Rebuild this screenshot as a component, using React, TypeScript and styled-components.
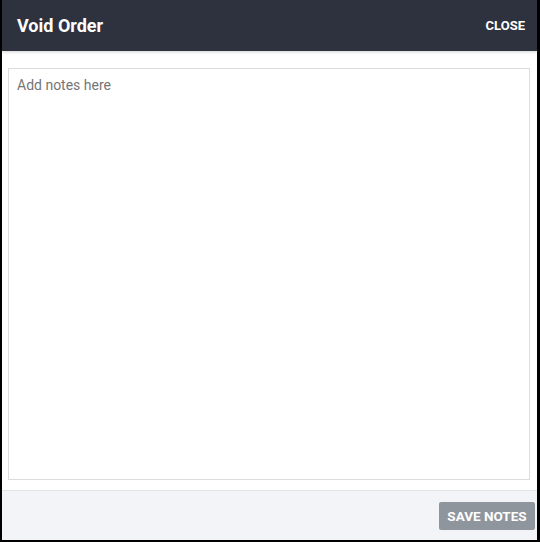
import React, { useState } from "react";
import styled, { createGlobalStyle } from "styled-components";

const GlobalStyle = createGlobalStyle`
  html, body {
    margin: 0;
    padding: 0;
    background: #000;
  }
  * {
    box-sizing: border-box;
  }
`;

const StyledDialog = styled.div`
  width: 540px;
  height: 542px;
  display: flex;
  flex-direction: column;
  border-style: solid;
  border-color: #000;
  border-width: 0 3px 2px 2px;
  background: #fff;
  font-family: Roboto, "Liberation Sans", sans-serif;
`;

const StyledHeader = styled.header`
  position: relative;
  z-index: 1;
  display: flex;
  justify-content: space-between;
  align-items: center;
  height: 51px;
  flex-shrink: 0;
  padding: 0 12px 0 15px;
  background: #2d323e;
  box-shadow: 0 1px 3px rgba(0, 0, 0, 0.18);
`;

const StyledTitle = styled.h1`
  margin: 0;
  font-size: 18px;
  font-weight: 700;
  color: #fff;
`;

const StyledCloseButton = styled.button`
  padding: 0;
  border: 0 none;
  background: none;
  font-family: inherit;
  font-size: 13px;
  font-weight: 700;
  color: #fff;
  cursor: pointer;
`;

const StyledBody = styled.div`
  flex: 1;
  display: flex;
  padding: 17px 7px 10px 6px;
`;

const StyledNotes = styled.textarea`
  flex: 1;
  resize: none;
  padding: 8px 8px;
  border: 1px solid #dcdcdc;
  font-family: inherit;
  font-size: 14px;
  line-height: 17px;
  color: #333;
  outline: none;

  ::placeholder {
    color: #a0a0a0;
  }
`;

const StyledFooter = styled.footer`
  display: flex;
  justify-content: flex-end;
  align-items: flex-start;
  height: 50px;
  flex-shrink: 0;
  padding: 11px 2px 0 0;
  background: #f3f4f8;
  border-top: 1px solid #e3e4e8;
`;

const StyledSaveButton = styled.button<{ isDisabled: boolean }>`
  width: 96px;
  height: 28px;
  padding: 0;
  border: 0 none;
  border-radius: 2px;
  background: ${(props) => (props.isDisabled ? "#8f959c" : "#2d323e")};
  font-family: inherit;
  font-size: 13.5px;
  font-weight: 700;
  color: #fff;
  cursor: ${(props) => (props.isDisabled ? "default" : "pointer")};
`;

export default function App() {
  const [notes, setNotes] = useState("");

  return (
    <>
      <GlobalStyle />
      <StyledDialog>
        <StyledHeader>
          <StyledTitle>Void Order</StyledTitle>
          <StyledCloseButton>CLOSE</StyledCloseButton>
        </StyledHeader>
        <StyledBody>
          <StyledNotes
            placeholder="Add notes here"
            value={notes}
            onChange={(e) => setNotes(e.target.value)}
          />
        </StyledBody>
        <StyledFooter>
          <StyledSaveButton isDisabled={notes.length === 0}>SAVE NOTES</StyledSaveButton>
        </StyledFooter>
      </StyledDialog>
    </>
  );
}
